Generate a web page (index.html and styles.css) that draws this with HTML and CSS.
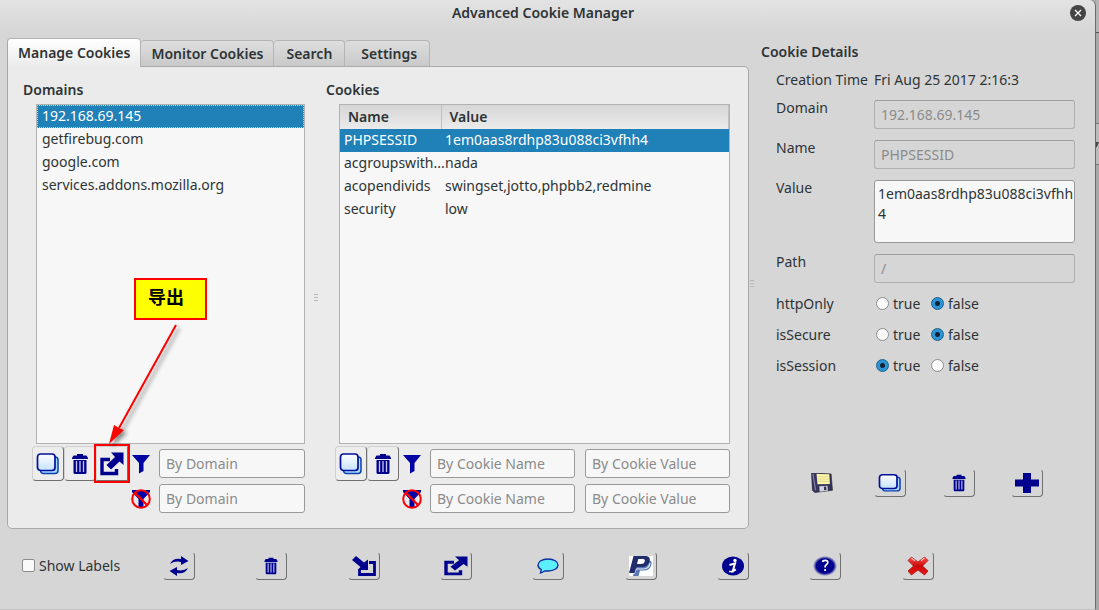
FILE: index.html
```html
<!DOCTYPE html>
<html lang="en">
<head>
<meta charset="utf-8">
<title>Advanced Cookie Manager</title>
<link rel="stylesheet" href="styles.css">
</head>
<body>
<svg class="defs" aria-hidden="true">
  <defs>
    <linearGradient id="sheet" x1="0" y1="0" x2="0" y2="1"><stop offset="0" stop-color="#fff"/><stop offset="1" stop-color="#c4e2ff"/></linearGradient>
    <linearGradient id="red" x1="0" y1="0" x2="0" y2="1"><stop offset="0" stop-color="#ff5a50"/><stop offset=".5" stop-color="#c80808"/><stop offset="1" stop-color="#f01818"/></linearGradient>
    <radialGradient id="glow"><stop offset=".72" stop-color="#00008f"/><stop offset="1" stop-color="#00008f" stop-opacity="0"/></radialGradient>
    <symbol id="i-copy" viewBox="0 0 24 24" preserveAspectRatio="none"><rect x="4.500" y="5" width="17.500" height="16.500" rx="3" fill="#a9dcff" stroke="#0a3fb0" stroke-width="1.500"/><rect x="1.500" y="2" width="17.500" height="16.500" rx="3" fill="url(#sheet)" stroke="#00109a" stroke-width="1.700"/></symbol>
    <symbol id="i-trash" viewBox="0 0 18 22"><path d="M6 2.500V1h6v1.500h3.500L17 5v1H1V5l1.500-2.500z" fill="#00008f"/><path d="M2.500 7h13v12.500q0 1.500-1.500 1.500H4q-1.500 0-1.500-1.500z" fill="#00008f"/><path d="M5.500 8v11M9 8v11M12.500 8v11" stroke="#c8c8ee" stroke-width="1.300"/></symbol>
    <symbol id="i-export" viewBox="0 0 24 24" preserveAspectRatio="none"><path d="M10 7.500H2v14h14.500V17" fill="none" stroke="#00008f" stroke-width="3.400"/><path d="M11 .5h12.500V13l-4-3.500-8.500 8L6.500 13l8.500-8z" fill="#00008f"/></symbol>
    <symbol id="i-import" viewBox="0 0 24 20"><path d="M17 6.500h5.500v12h-15V14" fill="none" stroke="#00008f" stroke-width="2.800"/><path d="M4 0l8 6.500 4-3V14H5.500l3-3L0 4z" fill="#00008f"/></symbol>
    <symbol id="i-funnel" viewBox="0 0 18 20"><path d="M0 1h18l-6.500 8v8L7 19.500V9z" fill="#0000a5"/></symbol>
    <symbol id="i-nofilter" viewBox="0 0 20 20"><path d="M1 1h18v2l-6.500 7v8h-5v-8L1 3z" fill="#0000a5"/><circle cx="10" cy="10" r="8.800" fill="none" stroke="#f00" stroke-width="2"/><path d="M4 4l12 12" stroke="#f00" stroke-width="2.300"/></symbol>
    <symbol id="i-refresh" viewBox="0 0 20 20"><path d="M1 8Q4 1.500 12 3V0l7.500 5L12 9V6Q6 4.500 1 8z" fill="#00008f"/><path d="M19 12q-3 6.500-11 5v3L.5 15 8 11v3q6 1.500 11-2z" fill="#00008f"/></symbol>
    <symbol id="i-chat" viewBox="0 0 22 16"><path d="M11 1c6 0 10 2.600 10 6s-4 6-10 6H8l-4.500 2 .8-3.500C2 10.500 1 8.800 1 7c0-3.400 4-6 10-6z" fill="#5cf0ff" stroke="#0e2aa0" stroke-width="1.300"/></symbol>
    <symbol id="i-paypal" viewBox="0 0 24 20"><path d="M0 0h24v20H0z" fill="#fff"/><path d="M8 4h10c4.500 0 5.500 2.500 4 6-1.200 3-3.800 4.500-7 4.500h-4L9.500 20H4z" fill="#5676b4"/><path d="M5 18l2-5h7c4 0 6.500-2 7-6" fill="none" stroke="#e8effa" stroke-width="1.200"/><path d="M4.500 0H16c4.500 0 5.600 2.600 4.400 6-1.200 3.500-4 5-7.400 5H7.500L5.500 17H0z" fill="#202c6c"/><path d="M9.300 3h4.400c2.200 0 2.400 1 2 2.500-.5 1.800-1.800 2.500-3.700 2.500H8z" fill="#fff"/></symbol>
    <symbol id="i-info" viewBox="0 0 22 20"><ellipse cx="11" cy="10" rx="11" ry="9.500" fill="#00008f"/><circle cx="13" cy="4.500" r="1.700" fill="#fff"/><path d="M7.500 9l5.500-1.500-2.200 7.500 3-1.500" fill="none" stroke="#fff" stroke-width="2"/><path d="M7 15.500h5" stroke="#fff" stroke-width="1.500"/></symbol>
    <symbol id="i-help" viewBox="0 0 24 20"><rect width="24" height="20" rx="8" fill="url(#glow)"/><path d="M9.500 6q.3-1.600 2.700-1.600 2.600 0 2.600 2.100 0 1.300-1.500 2.200-1.200.8-1.200 2.300v.5M12.100 13v2" fill="none" stroke="#fff" stroke-width="1.700"/></symbol>
    <symbol id="i-close" viewBox="0 0 22 20"><path d="M4.500 1L11 6l6.500-5L21 4.500 15.500 10l5.500 5-3.500 4-6.500-5-6.500 5L1 15l5.500-5L1 4.500z" fill="url(#red)" stroke="#a40606" stroke-width=".7"/><path d="M4.500 2L8 4.700M17.500 2L14 4.700" stroke="#ffb8b0" stroke-width="1.200"/></symbol>
    <symbol id="i-plus" viewBox="0 0 24 20"><path d="M8 0h8v6.500h8v7h-8V20H8v-6.500H0v-7h8z" fill="#00008f"/></symbol>
    <symbol id="i-save" viewBox="0 0 24 22"><path d="M.5 0L22 1l1.500 18L4 21.500 1.500 19z" fill="#37345c" stroke="#222" stroke-width=".7"/><path d="M2 1l3 18" stroke="#8580b0" stroke-width="1.300"/><path d="M6 1l14 .5.700 10.500L7 12.500z" fill="#fff9b0"/><path d="M7 4l12.500.200M7.200 6.500l12.500.200M7.500 9l12.500.200" stroke="#d0c878" stroke-width=".8"/><path d="M9 14.500l9-.5.500 5.500-9 1z" fill="#d2d4e0"/><path d="M14 15l2.500-.200.400 4-2.500.3z" fill="#34324e"/></symbol>
  </defs>
</svg>

<div class="desktop">
  <div class="window">
    <header class="titlebar">
      <h1 class="title">Advanced Cookie Manager</h1>
      <button class="window-close" aria-label="Close window"><svg viewBox="0 0 16 16"><circle cx="8" cy="8" r="8" fill="#454545"/><path d="M5 5l6 6M11 5l-6 6" stroke="#fff" stroke-width="1.300"/></svg></button>
    </header>

    <div class="main">
      <section class="manager">
        <div class="tabs" role="tablist">
          <button class="tab tab-long tab-active" role="tab" aria-selected="true">Manage Cookies</button>
          <button class="tab tab-long" role="tab">Monitor Cookies</button>
          <button class="tab" role="tab">Search</button>
          <button class="tab tab-last" role="tab">Settings</button>
        </div>
        <div class="panel" role="tabpanel">
          <section class="group">
            <h2 class="heading">Domains</h2>
            <ul class="listbox" role="listbox" aria-label="Domains">
              <li class="item item-selected" role="option" aria-selected="true">192.168.69.145</li>
              <li class="item" role="option">getfirebug.com</li>
              <li class="item" role="option">google.com</li>
              <li class="item" role="option">services.addons.mozilla.org</li>
            </ul>
            <div class="controls controls-domain">
              <button class="tool" aria-label="Copy"><svg class="icon"><use href="#i-copy"/></svg></button>
              <button class="tool" aria-label="Delete"><svg class="icon icon-trash"><use href="#i-trash"/></svg></button>
              <button class="tool tool-marked" aria-label="Export"><svg class="icon"><use href="#i-export"/></svg></button>
              <svg class="filter"><use href="#i-funnel"/></svg>
              <input class="field" type="text" placeholder="By Domain" aria-label="Include domain">
              <svg class="filter filter-off"><use href="#i-nofilter"/></svg>
              <input class="field" type="text" placeholder="By Domain" aria-label="Exclude domain">
            </div>
          </section>
          <div class="grip" aria-hidden="true"></div>
          <section class="group">
            <h2 class="heading">Cookies</h2>
            <div class="listbox">
              <table class="cookies">
                <thead><tr><th class="col-name">Name</th><th>Value</th></tr></thead>
                <tbody>
                  <tr class="item-selected"><td>PHPSESSID</td><td>1em0aas8rdhp83u088ci3vfhh4</td></tr>
                  <tr><td>acgroupswith...</td><td>nada</td></tr>
                  <tr><td>acopendivids</td><td>swingset,jotto,phpbb2,redmine</td></tr>
                  <tr><td>security</td><td>low</td></tr>
                </tbody>
              </table>
            </div>
            <div class="controls controls-cookie">
              <button class="tool" aria-label="Copy"><svg class="icon"><use href="#i-copy"/></svg></button>
              <button class="tool" aria-label="Delete"><svg class="icon icon-trash"><use href="#i-trash"/></svg></button>
              <svg class="filter"><use href="#i-funnel"/></svg>
              <input class="field" type="text" placeholder="By Cookie Name" aria-label="Include name">
              <input class="field field-next" type="text" placeholder="By Cookie Value" aria-label="Include value">
              <svg class="filter filter-off"><use href="#i-nofilter"/></svg>
              <input class="field" type="text" placeholder="By Cookie Name" aria-label="Exclude name">
              <input class="field field-next" type="text" placeholder="By Cookie Value" aria-label="Exclude value">
            </div>
          </section>
        </div>
      </section>

      <div class="grip" aria-hidden="true"></div>

      <section class="details">
        <h2 class="heading">Cookie Details</h2>
        <div class="form">
          <span class="caption">Creation Time</span><span class="caption">Fri Aug 25 2017 2:16:3</span>
          <label class="label" for="domain">Domain</label><input class="field" id="domain" type="text" value="192.168.69.145" disabled>
          <label class="label" for="name">Name</label><input class="field" id="name" type="text" value="PHPSESSID" disabled>
          <label class="label" for="value">Value</label><textarea class="field field-area" id="value">1em0aas8rdhp83u088ci3vfhh4</textarea>
          <label class="label" for="path">Path</label><input class="field" id="path" type="text" value="/" disabled>
        </div>
        <div class="flags">
          <span>httpOnly</span>
          <label class="choice"><input type="radio" name="http">true</label>
          <label class="choice"><input type="radio" name="http" checked>false</label>
          <span>isSecure</span>
          <label class="choice"><input type="radio" name="secure">true</label>
          <label class="choice"><input type="radio" name="secure" checked>false</label>
          <span>isSession</span>
          <label class="choice"><input type="radio" name="session" checked>true</label>
          <label class="choice"><input type="radio" name="session">false</label>
        </div>
        <div class="actions">
          <button class="action action-plain" aria-label="Save"><svg class="icon"><use href="#i-save"/></svg></button>
          <button class="action" aria-label="Copy"><svg class="icon"><use href="#i-copy"/></svg></button>
          <button class="action" aria-label="Delete"><svg class="icon icon-trash-small"><use href="#i-trash"/></svg></button>
          <button class="action" aria-label="Add"><svg class="icon"><use href="#i-plus"/></svg></button>
        </div>
      </section>
    </div>

    <footer class="toolbar">
      <label class="choice"><input type="checkbox">Show Labels</label>
      <button class="action" aria-label="Refresh"><svg class="icon"><use href="#i-refresh"/></svg></button>
      <button class="action" aria-label="Delete all"><svg class="icon icon-trash-small"><use href="#i-trash"/></svg></button>
      <button class="action" aria-label="Import"><svg class="icon"><use href="#i-import"/></svg></button>
      <button class="action" aria-label="Export all"><svg class="icon"><use href="#i-export"/></svg></button>
      <button class="action" aria-label="Feedback"><svg class="icon icon-chat"><use href="#i-chat"/></svg></button>
      <button class="action" aria-label="Donate"><svg class="icon"><use href="#i-paypal"/></svg></button>
      <button class="action" aria-label="About"><svg class="icon"><use href="#i-info"/></svg></button>
      <button class="action" aria-label="Help"><svg class="icon"><use href="#i-help"/></svg></button>
      <button class="action" aria-label="Close"><svg class="icon"><use href="#i-close"/></svg></button>
    </footer>

    <div class="callout">导出</div>
    <svg class="arrow" viewBox="0 0 90 130" aria-hidden="true"><path d="M76 5L19 108" stroke="#f00" stroke-width="2"/><path d="M9 124l5-19 5 3 5 2z" fill="#f00"/></svg>
  </div>
  <div class="behind" aria-hidden="true"><div class="behind-bar"></div><div class="behind-page"></div><div class="behind-select"><svg viewBox="0 0 4 8"><path d="M0 0h4L1 7H0z" fill="#444"/></svg></div><div class="behind-rest"></div></div>
</div>
</body>
</html>
```
FILE: styles.css
```css
* { box-sizing: border-box; }

body {
  margin: 0;
  font: 14px/20px "Noto Sans", "Open Sans", sans-serif;
  color: #2e3436;
}

button, input, textarea { font: inherit; color: inherit; margin: 0; }
button { background: none; border: 0; padding: 0; }
svg { display: block; }
.defs { position: absolute; width: 0; height: 0; }

.desktop { display: flex; min-height: 100vh; background: #a8a8a8; }

.window {
  position: relative;
  flex: 1;
  min-width: 0;
  display: flex;
  flex-direction: column;
  background: linear-gradient(#e3e3e3, #d6d6d6 32px);
  border-right: 1px solid #6c6c6c;
  border-bottom: 1px solid #c2c2c2;
  border-top-right-radius: 6px;
}

.titlebar {
  display: grid;
  grid-template-columns: 1fr auto 1fr;
  align-items: center;
  height: 26px;
  padding-right: 9px;
  margin-bottom: 12px;
}
.title { grid-column: 2; margin: 0; font-size: 14px; font-weight: 600; }
.window-close { justify-self: end; width: 16px; height: 16px; }

.main {
  flex: 1;
  display: grid;
  grid-template-columns: minmax(0, 742fr) 6px minmax(0, 340fr);
  padding-left: 7px;
}

.manager { display: flex; flex-direction: column; }

.tabs { display: flex; align-items: flex-end; height: 28px; }
.tab {
  height: 26px;
  padding: 0 12px;
  font-weight: 600;
  background: linear-gradient(#dedede, #c9c9c9);
  border: 1px solid #b4b4b4;
  border-left: 0;
  border-bottom: 0;
  border-radius: 4px 4px 0 0;
}
.tab-long { padding: 0 10px; }
.tab-last { padding-left: 16px; }
.tab-active {
  position: relative;
  height: 29px;
  margin-bottom: -1px;
  background: linear-gradient(#fff, #ebebeb);
  border-left: 1px solid #a9a9a9;
}

.panel {
  flex: 1;
  display: grid;
  grid-template-columns: minmax(0, 282fr) 21px minmax(0, 404fr);
  padding: 13px 18px 12px 15px;
  background: #ebebeb;
  border: 1px solid #a9a9a9;
  border-radius: 0 5px 5px 5px;
}

.group { display: flex; flex-direction: column; }
.heading { margin: 0; font-size: 14px; line-height: 20px; font-weight: 600; }

.grip {
  align-self: center;
  justify-self: center;
  width: 4px;
  height: 8px;
  background: repeating-linear-gradient(#b8b8b8 0 1px, transparent 1px 3px);
}

.listbox {
  flex: 1;
  margin: 4px 0 2px 13px;
  padding: 0;
  list-style: none;
  background: #f7f7f7;
  border: 1px solid #b2b2b2;
}
.item { height: 23px; line-height: 22px; padding-left: 5px; }
.item-selected { background: #2080b8; color: #fff; }
.item.item-selected { outline: 1px dotted #b9d8ea; outline-offset: -1px; }

.cookies { width: 100%; table-layout: fixed; border-collapse: collapse; }
.cookies th {
  height: 24px;
  padding: 0 8px;
  text-align: left;
  font-weight: 600;
  background: linear-gradient(#d6d6d6, #ebebeb);
  border-right: 1px solid #c0c0c0;
}
.cookies .col-name { width: 101px; }
.cookies td { height: 23px; padding: 0 0 0 4px; line-height: 22px; vertical-align: top; white-space: nowrap; }

.controls {
  display: grid;
  grid-auto-rows: 35px;
  align-items: center;
  margin-left: 9px;
}
.controls-domain { grid-template-columns: 32px 32px 32px 31px minmax(0, 1fr); }
.controls-cookie { grid-template-columns: 32px 32px 31px minmax(0, 1fr) 10px minmax(0, 1fr); }

.tool, .action {
  display: flex;
  align-items: center;
  justify-content: center;
  border: 1px solid #d0d0d0;
  border-right-color: #707070;
  border-bottom-color: #707070;
  border-radius: 4px;
}
.tool { height: 35px; background: #ededed; }
.tool-marked { outline: 2px solid #f00; border-radius: 0; }
.icon { width: 24px; height: 22px; }
.tool .icon { height: 24px; }
.tool .icon-trash { width: 18px; height: 22px; }

.filter { width: 18px; height: 20px; margin-left: 4px; }
.filter-off { width: 20px; margin-left: 3px; }
.controls-domain .filter { grid-column: 4; }
.controls-cookie .filter { grid-column: 3; }
.controls .field-next { grid-column: 6; }

.field {
  min-width: 0;
  height: 29px;
  padding: 0 6px;
  background: #f7f7f7;
  border: 1px solid #999;
  border-radius: 3px;
}
.field::placeholder { color: #8b8b8b; opacity: 1; }
.field:disabled { background: transparent; color: #8b8b8b; border-color: #9c9c9c #b0b0b0 #b0b0b0; }
.field-area { height: 63px; padding: 3px 0 3px 3px; resize: none; word-break: break-all; overflow: hidden; }

.details { display: flex; flex-direction: column; padding: 4px 20px 0 6px; }
.form {
  display: grid;
  grid-template-columns: 98px minmax(0, 1fr);
  row-gap: 11px;
  margin: 8px 0 0 15px;
}
.caption { height: 19px; white-space: nowrap; }
.label { align-self: start; line-height: 16px; }

.flags {
  display: grid;
  grid-template-columns: 100px 55px 1fr;
  grid-auto-rows: 31px;
  align-items: center;
  margin: 5px 0 0 15px;
}
.choice { display: flex; align-items: center; gap: 4px; white-space: nowrap; }
.choice input {
  appearance: none;
  width: 13px;
  height: 13px;
  background: #fafafa;
  border: 1px solid #8c8c8c;
  border-radius: 2px;
}
.choice input[type="radio"] { border-radius: 50%; }
.choice input:checked {
  border-color: #1c5f8a;
  background: radial-gradient(circle, #123 0 2px, #2a94d4 3px);
}

.actions {
  display: grid;
  grid-template-columns: repeat(4, 1fr);
  justify-items: center;
  margin: auto 14px 32px 27px;
}
.action { width: 32px; height: 28px; border-top-color: transparent; border-left-color: transparent; }
.action-plain { border-color: transparent; }
.action .icon { height: 20px; width: 24px; }
.action .icon-trash-small { width: 16px; height: 18px; }
.action .icon-chat { width: 22px; height: 16px; }

.toolbar {
  display: grid;
  grid-template-columns: 111px repeat(9, minmax(0, 1fr));
  align-items: center;
  justify-items: center;
  height: 80px;
  padding: 0 131px 7px 22px;
}
.toolbar .choice { justify-self: start; }

.callout {
  position: absolute;
  left: 134px;
  top: 278px;
  width: 73px;
  height: 42px;
  padding: 5px 12px;
  background: #ff0;
  border: 2px solid #f00;
  color: #000;
  font: bold 18px/22px "Noto Sans CJK SC", sans-serif;
}
.arrow {
  position: absolute;
  left: 100px;
  top: 320px;
  width: 90px;
  height: 130px;
  filter: drop-shadow(3px 3px 2px rgba(0, 0, 0, .45));
}

.behind { width: 3px; display: flex; flex-direction: column; background: #a8a8a8; }
.behind-bar { height: 33px; background: #b4b4b4; border-bottom: 1px solid #555; }
.behind-page { height: 91px; border-bottom: 1px solid #777; }
.behind-select { height: 41px; padding-top: 18px; background: #bbb; border-bottom: 1px solid #777; }
.behind-rest { flex: 1; }
```
